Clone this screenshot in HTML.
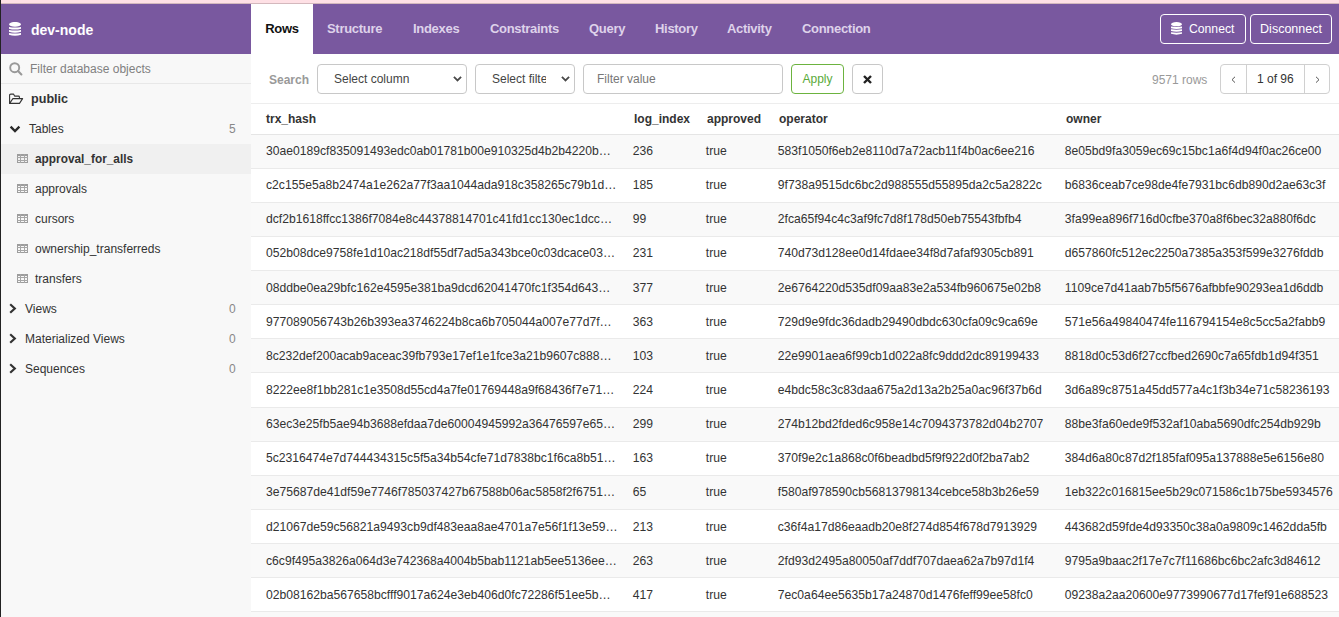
<!DOCTYPE html>
<html><head><meta charset="utf-8">
<style>
*{box-sizing:border-box;margin:0;padding:0}
html,body{width:1339px;height:617px;overflow:hidden;background:#fff;font-family:"Liberation Sans",sans-serif;font-size:12px;color:#333}
.abs{position:absolute}
#strip{left:0;top:0;width:1339px;height:3px;background:#fee0e5}
#stripline{left:0;top:3px;width:1339px;height:1px;background:#d4b8bd}
#lborder{left:0;top:0;width:1px;height:617px;background:#222}
#sidebar{left:1px;top:4px;width:250px;height:613px;background:#f8f8f8}
#sbhead{left:1px;top:4px;width:250px;height:50px;background:#79589f;color:#fff}
#sbhead .name{position:absolute;left:30px;top:15.5px;font-size:14px;font-weight:bold;line-height:20px}
#filter{left:1px;top:55px;width:250px;height:29px;border-bottom:1px solid #e8e8e8}
#filter .ph{position:absolute;left:29px;top:6px;color:#808080;line-height:16px}
.sbitem{position:absolute;left:1px;width:250px;height:30px;line-height:30px;color:#333}
.sbitem .t{position:absolute;top:0}
.sbitem .c{position:absolute;left:228px;top:0;color:#888}
#header{left:251px;top:4px;width:1088px;height:50px;background:#79589f}
.tab{position:absolute;top:0;height:50px;line-height:49px;font-weight:bold;font-size:13px;letter-spacing:-0.3px;color:#ded2ea}
.tab.active{background:#fff;color:#111}
.hbtn{position:absolute;top:10px;height:30px;border:1.5px solid #fff;border-radius:4px;color:#fff;font-size:12.5px;line-height:28.5px}
#toolbar{left:251px;top:54px;width:1088px;height:50px;background:#fff;border-bottom:1px solid #ededed}
.sel{position:absolute;top:10px;height:30px;border:1px solid #c8c8c8;border-radius:4px;background:#fff;line-height:28px;color:#444;overflow:hidden;white-space:nowrap}
table{position:absolute;left:251px;top:104px;width:1107px;border-collapse:collapse;table-layout:fixed}
th{height:30px;text-align:left;font-weight:bold;color:#333;padding:0 8px;background:#fff;border-bottom:1px solid #e5e5e5}
td{padding:8.5px 8px 7.5px 6.8px;font-size:12.15px;line-height:17.14px;border-top:1px solid #eaeaea;white-space:nowrap;overflow:hidden;text-overflow:ellipsis;color:#333}
tr.odd td{background:#f9f9f9}
td.h{padding-left:15px}
</style></head><body>
<div id="sidebar" class="abs"></div>
<div id="strip" class="abs"></div>
<div id="stripline" class="abs"></div>
<div id="lborder" class="abs"></div>

<div id="sbhead" class="abs">
  <svg class="abs" style="left:8px;top:18px" width="12" height="14" viewBox="0 0 12 14"><ellipse cx="6" cy="2.3" rx="6" ry="2.35" fill="#fff"/><path d="M0 4.90 Q6 5.90 12 4.90 V6.70 Q6 8.50 0 6.70Z" fill="#fff"/><path d="M0 7.95 Q6 8.95 12 7.95 V9.75 Q6 11.55 0 9.75Z" fill="#fff"/><path d="M0 11.00 Q6 12.00 12 11.00 V12.80 Q6 14.60 0 12.80Z" fill="#fff"/></svg>
  <div class="name">dev-node</div>
</div>

<div id="filter" class="abs">
  <svg class="abs" style="left:8px;top:7px" width="14" height="14" viewBox="0 0 14 14">
    <circle cx="5.7" cy="5.7" r="4.5" fill="none" stroke="#999" stroke-width="1.9"/>
    <path d="M9 9 L12.4 12.4" stroke="#999" stroke-width="2.1" stroke-linecap="round"/>
  </svg>
  <div class="ph">Filter database objects</div>
</div>

<div class="sbitem" style="top:84px">
  <svg class="abs" style="left:7px;top:9px" width="16" height="12" viewBox="0 0 16 12"><path d="M1.6 10.4 V2.2 Q1.6 1.1 2.7 1.1 H5.5 L6.6 3.1 H10.5 Q11.4 3.1 11.4 4 V5.6" fill="none" stroke="#333" stroke-width="1.1" stroke-linejoin="round"/><path d="M1.6 10.4 L4.9 5.6 H14.6 L11.5 10.4 Z" fill="none" stroke="#333" stroke-width="1.1" stroke-linejoin="round"/></svg>
  <div class="t" style="left:30px;font-weight:bold;font-size:12.6px;color:#333">public</div>
</div>
<div class="sbitem" style="top:114px">
  <svg class="abs" style="left:8px;top:11px" width="12" height="8" viewBox="0 0 12 8">
    <path d="M1.6 1.6 L6 6 L10.4 1.6" fill="none" stroke="#2a2a2a" stroke-width="2.3"/>
  </svg>
  <div class="t" style="left:28px">Tables</div>
  <div class="c">5</div>
</div>
<div class="sbitem" style="top:144px;background:#f0f0f0"><svg class="abs" style="left:16px;top:10px" width="11" height="9" viewBox="0 0 11 9"><rect x="0.5" y="0.5" width="10" height="8" fill="none" stroke="#9c9c9c" stroke-width="1"/><rect x="0" y="0" width="11" height="2" fill="#9c9c9c"/><path d="M0 3.5 H11 M0 6.5 H11 M3.5 0 V9 M7.5 0 V9" stroke="#a6a6a6" stroke-width="1"/></svg><div class="t" style="left:34px;font-weight:bold;font-size:11.85px">approval_for_alls</div></div>
<div class="sbitem" style="top:174px"><svg class="abs" style="left:16px;top:10px" width="11" height="9" viewBox="0 0 11 9"><rect x="0.5" y="0.5" width="10" height="8" fill="none" stroke="#9c9c9c" stroke-width="1"/><rect x="0" y="0" width="11" height="2" fill="#9c9c9c"/><path d="M0 3.5 H11 M0 6.5 H11 M3.5 0 V9 M7.5 0 V9" stroke="#a6a6a6" stroke-width="1"/></svg><div class="t" style="left:34px">approvals</div></div>
<div class="sbitem" style="top:204px"><svg class="abs" style="left:16px;top:10px" width="11" height="9" viewBox="0 0 11 9"><rect x="0.5" y="0.5" width="10" height="8" fill="none" stroke="#9c9c9c" stroke-width="1"/><rect x="0" y="0" width="11" height="2" fill="#9c9c9c"/><path d="M0 3.5 H11 M0 6.5 H11 M3.5 0 V9 M7.5 0 V9" stroke="#a6a6a6" stroke-width="1"/></svg><div class="t" style="left:34px">cursors</div></div>
<div class="sbitem" style="top:234px"><svg class="abs" style="left:16px;top:10px" width="11" height="9" viewBox="0 0 11 9"><rect x="0.5" y="0.5" width="10" height="8" fill="none" stroke="#9c9c9c" stroke-width="1"/><rect x="0" y="0" width="11" height="2" fill="#9c9c9c"/><path d="M0 3.5 H11 M0 6.5 H11 M3.5 0 V9 M7.5 0 V9" stroke="#a6a6a6" stroke-width="1"/></svg><div class="t" style="left:34px">ownership_transferreds</div></div>
<div class="sbitem" style="top:264px"><svg class="abs" style="left:16px;top:10px" width="11" height="9" viewBox="0 0 11 9"><rect x="0.5" y="0.5" width="10" height="8" fill="none" stroke="#9c9c9c" stroke-width="1"/><rect x="0" y="0" width="11" height="2" fill="#9c9c9c"/><path d="M0 3.5 H11 M0 6.5 H11 M3.5 0 V9 M7.5 0 V9" stroke="#a6a6a6" stroke-width="1"/></svg><div class="t" style="left:34px">transfers</div></div>
<div class="sbitem" style="top:294px">
  <svg class="abs" style="left:8px;top:9px" width="8" height="11" viewBox="0 0 8 11"><path d="M1.2 1.2 L5.8 5.5 L1.2 9.8" fill="none" stroke="#333" stroke-width="2.2"/></svg>
  <div class="t" style="left:24px">Views</div><div class="c">0</div></div>
<div class="sbitem" style="top:324px">
  <svg class="abs" style="left:8px;top:9px" width="8" height="11" viewBox="0 0 8 11"><path d="M1.2 1.2 L5.8 5.5 L1.2 9.8" fill="none" stroke="#333" stroke-width="2.2"/></svg>
  <div class="t" style="left:24px">Materialized Views</div><div class="c">0</div></div>
<div class="sbitem" style="top:354px">
  <svg class="abs" style="left:8px;top:9px" width="8" height="11" viewBox="0 0 8 11"><path d="M1.2 1.2 L5.8 5.5 L1.2 9.8" fill="none" stroke="#333" stroke-width="2.2"/></svg>
  <div class="t" style="left:24px">Sequences</div><div class="c">0</div></div>

<div id="header" class="abs">
  <div class="tab active" style="left:0;width:62px;text-align:center">Rows</div>
  <div class="tab" style="left:76px">Structure</div>
  <div class="tab" style="left:162px">Indexes</div>
  <div class="tab" style="left:239px">Constraints</div>
  <div class="tab" style="left:338px">Query</div>
  <div class="tab" style="left:404px">History</div>
  <div class="tab" style="left:476px">Activity</div>
  <div class="tab" style="left:551px">Connection</div>
  <div class="hbtn" style="left:909px;width:86px">
    <svg class="abs" style="left:10px;top:7px" width="11" height="13" viewBox="0 0 12 14"><ellipse cx="6" cy="2.3" rx="6" ry="2.35" fill="#fff"/><path d="M0 4.90 Q6 5.90 12 4.90 V6.70 Q6 8.50 0 6.70Z" fill="#fff"/><path d="M0 7.95 Q6 8.95 12 7.95 V9.75 Q6 11.55 0 9.75Z" fill="#fff"/><path d="M0 11.00 Q6 12.00 12 11.00 V12.80 Q6 14.60 0 12.80Z" fill="#fff"/></svg>
    <span class="abs" style="left:28px;top:0;font-size:12.2px">Connect</span>
  </div>
  <div class="hbtn" style="left:999px;width:82px;text-align:center">Disconnect</div>
</div>

<div id="toolbar" class="abs">
  <div class="abs" style="left:18px;top:18px;font-weight:bold;color:#999;line-height:16px">Search</div>
  <div class="sel" style="left:66px;width:150px"><span style="position:absolute;left:16px">Select column</span>
    <svg class="abs" style="left:135px;top:11px" width="9" height="6" viewBox="0 0 9 6"><path d="M0.9 0.9 L4.5 4.5 L8.1 0.9" fill="none" stroke="#4a4a4a" stroke-width="1.8"/></svg></div>
  <div class="sel" style="left:224px;width:100px"><span style="position:absolute;left:16px;width:54px;overflow:hidden">Select filter</span>
    <svg class="abs" style="left:85px;top:11px" width="9" height="6" viewBox="0 0 9 6"><path d="M0.9 0.9 L4.5 4.5 L8.1 0.9" fill="none" stroke="#4a4a4a" stroke-width="1.8"/></svg></div>
  <div class="sel" style="left:332px;width:200px;color:#777"><span style="position:absolute;left:13px">Filter value</span></div>
  <div class="sel" style="left:540px;width:53px;border-color:#6cb33f;color:#5aaa3a;text-align:center">Apply</div>
  <div class="sel" style="left:601px;width:31px">
    <svg class="abs" style="left:10px;top:10px" width="9" height="9" viewBox="0 0 9 9"><path d="M1 1 L8 8 M8 1 L1 8" stroke="#222" stroke-width="2.4"/></svg></div>
  <div class="abs" style="left:901px;top:18px;color:#999;line-height:16px">9571 rows</div>
  <div class="sel" style="left:969px;width:110px;border-color:#d0d0d0">
    <div class="abs" style="left:25px;top:0;width:1px;height:30px;background:#d0d0d0"></div>
    <div class="abs" style="left:83px;top:0;width:1px;height:30px;background:#d0d0d0"></div>
    <svg class="abs" style="left:10px;top:11px" width="5" height="8" viewBox="0 0 5 8"><path d="M4 0.8 L1 3.7 L4 6.6" fill="none" stroke="#555" stroke-width="1"/></svg>
    <span class="abs" style="left:36px;top:0;color:#333">1 of 96</span>
    <svg class="abs" style="left:93.5px;top:11px" width="5" height="8" viewBox="0 0 5 8"><path d="M1 0.8 L4 3.7 L1 6.6" fill="none" stroke="#555" stroke-width="1"/></svg>
  </div>
</div>

<table id="results">
<colgroup><col style="width:375px"><col style="width:73px"><col style="width:72px"><col style="width:287px"><col style="width:300px"></colgroup>
<thead><tr><th style="padding-left:15px">trx_hash</th><th>log_index</th><th>approved</th><th>operator</th><th>owner</th></tr></thead>
<tbody id="tb">
<tr class="odd"><td class="h">30ae0189cf835091493edc0ab01781b00e910325d4b2b4220b&hellip;</td><td>236</td><td>true</td><td>583f1050f6eb2e8110d7a72acb11f4b0ac6ee216</td><td>8e05bd9fa3059ec69c15bc1a6f4d94f0ac26ce00</td></tr>
<tr><td class="h">c2c155e5a8b2474a1e262a77f3aa1044ada918c358265c79b1d&hellip;</td><td>185</td><td>true</td><td>9f738a9515dc6bc2d988555d55895da2c5a2822c</td><td>b6836ceab7ce98de4fe7931bc6db890d2ae63c3f</td></tr>
<tr class="odd"><td class="h">dcf2b1618ffcc1386f7084e8c44378814701c41fd1cc130ec1dcc&hellip;</td><td>99</td><td>true</td><td>2fca65f94c4c3af9fc7d8f178d50eb75543fbfb4</td><td>3fa99ea896f716d0cfbe370a8f6bec32a880f6dc</td></tr>
<tr><td class="h">052b08dce9758fe1d10ac218df55df7ad5a343bce0c03dcace03&hellip;</td><td>231</td><td>true</td><td>740d73d128ee0d14fdaee34f8d7afaf9305cb891</td><td>d657860fc512ec2250a7385a353f599e3276fddb</td></tr>
<tr class="odd"><td class="h">08ddbe0ea29bfc162e4595e381ba9dcd62041470fc1f354d643&hellip;</td><td>377</td><td>true</td><td>2e6764220d535df09aa83e2a534fb960675e02b8</td><td>1109ce7d41aab7b5f5676afbbfe90293ea1d6ddb</td></tr>
<tr><td class="h">977089056743b26b393ea3746224b8ca6b705044a007e77d7f&hellip;</td><td>363</td><td>true</td><td>729d9e9fdc36dadb29490dbdc630cfa09c9ca69e</td><td>571e56a49840474fe116794154e8c5cc5a2fabb9</td></tr>
<tr class="odd"><td class="h">8c232def200acab9aceac39fb793e17ef1e1fce3a21b9607c888&hellip;</td><td>103</td><td>true</td><td>22e9901aea6f99cb1d022a8fc9ddd2dc89199433</td><td>8818d0c53d6f27ccfbed2690c7a65fdb1d94f351</td></tr>
<tr><td class="h">8222ee8f1bb281c1e3508d55cd4a7fe01769448a9f68436f7e71&hellip;</td><td>224</td><td>true</td><td>e4bdc58c3c83daa675a2d13a2b25a0ac96f37b6d</td><td>3d6a89c8751a45dd577a4c1f3b34e71c58236193</td></tr>
<tr class="odd"><td class="h">63ec3e25fb5ae94b3688efdaa7de60004945992a36476597e65&hellip;</td><td>299</td><td>true</td><td>274b12bd2fded6c958e14c7094373782d04b2707</td><td>88be3fa60ede9f532af10aba5690dfc254db929b</td></tr>
<tr><td class="h">5c2316474e7d744434315c5f5a34b54cfe71d7838bc1f6ca8b51&hellip;</td><td>163</td><td>true</td><td>370f9e2c1a868c0f6beadbd5f9f922d0f2ba7ab2</td><td>384d6a80c87d2f185faf095a137888e5e6156e80</td></tr>
<tr class="odd"><td class="h">3e75687de41df59e7746f785037427b67588b06ac5858f2f6751&hellip;</td><td>65</td><td>true</td><td>f580af978590cb56813798134cebce58b3b26e59</td><td>1eb322c016815ee5b29c071586c1b75be5934576</td></tr>
<tr><td class="h">d21067de59c56821a9493cb9df483eaa8ae4701a7e56f1f13e59&hellip;</td><td>213</td><td>true</td><td>c36f4a17d86eaadb20e8f274d854f678d7913929</td><td>443682d59fde4d93350c38a0a9809c1462dda5fb</td></tr>
<tr class="odd"><td class="h">c6c9f495a3826a064d3e742368a4004b5bab1121ab5ee5136ee&hellip;</td><td>263</td><td>true</td><td>2fd93d2495a80050af7ddf707daea62a7b97d1f4</td><td>9795a9baac2f17e7c7f11686bc6bc2afc3d84612</td></tr>
<tr><td class="h">02b08162ba567658bcfff9017a624e3eb406d0fc72286f51ee5b&hellip;</td><td>417</td><td>true</td><td>7ec0a64ee5635b17a24870d1476feff99ee58fc0</td><td>09238a2aa20600e9773990677d17fef91e688523</td></tr>
<tr class="odd"><td class="h">0000000000000000000000000000000000000000000000000&hellip;</td><td>100</td><td>true</td><td>0000000000000000000000000000000000000000</td><td>0000000000000000000000000000000000000000</td></tr>
</tbody></table>
</body></html>
